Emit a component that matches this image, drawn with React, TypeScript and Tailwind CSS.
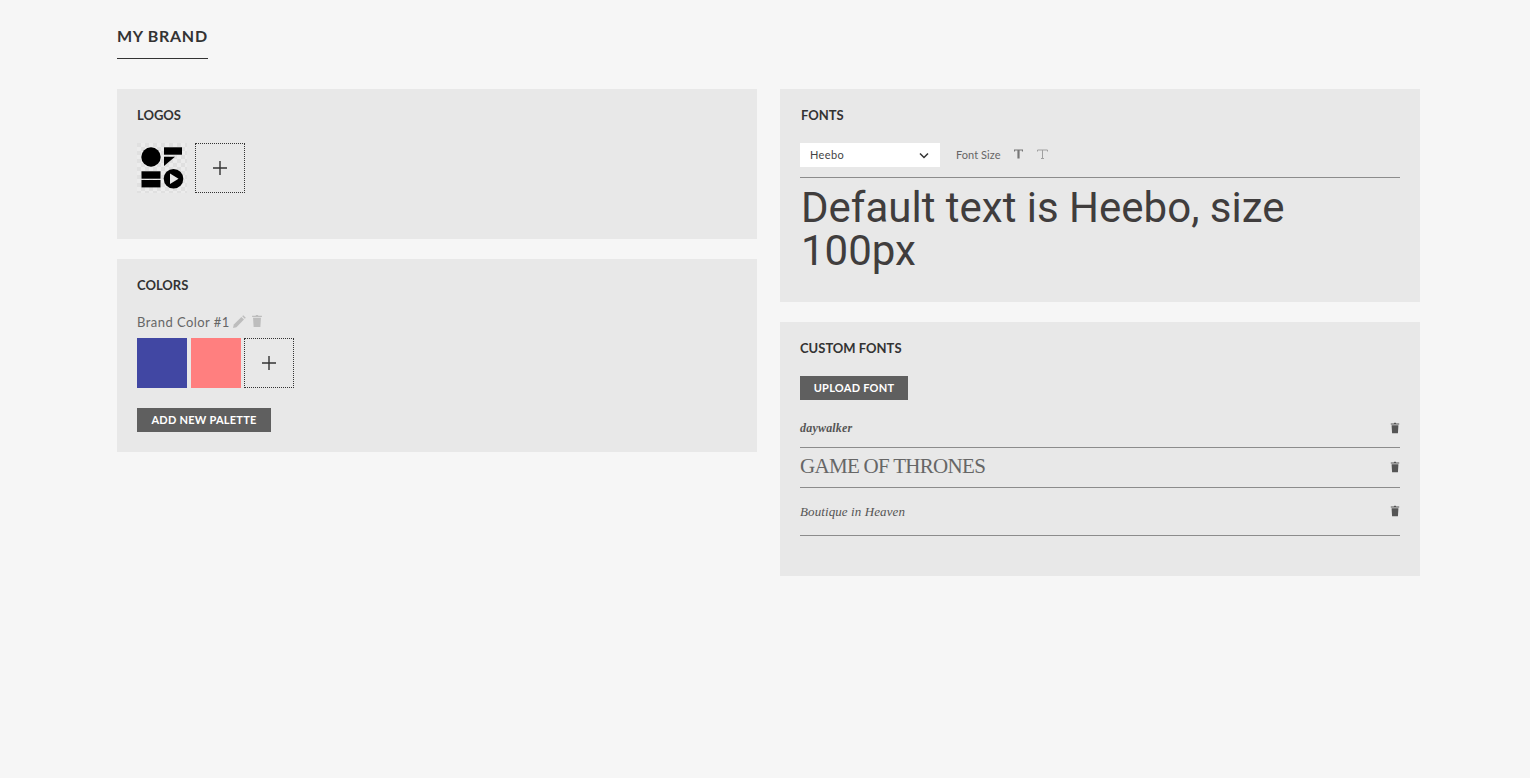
import React from 'react'

const sans = 'font-["Lato","Noto_Sans",sans-serif]'

const AddBox = () => (
  <div className="w-[50px] h-[50px] border border-dotted border-[#333] flex items-center justify-center">
    <svg width="14" height="14" viewBox="0 0 14 14" stroke="#333" strokeWidth="1.4">
      <path d="M7 0v14M0 7h14" />
    </svg>
  </div>
)

const Trash = ({ color = '#555', size = 12 }: { color?: string; size?: number }) => (
  <svg width={size} height={size} viewBox="0 0 12 12" fill={color}>
    <path d="M1.8 1.6h3L5.2.8h1.6l.4.8h3v1H1.8z" />
    <path d="M2.6 3.2h6.8l-.5 8H3.1z" />
  </svg>
)

const Logo = () => (
  <svg width="50" height="50" viewBox="0 0 50 50">
    <defs>
      <pattern id="check" width="8" height="8" patternUnits="userSpaceOnUse">
        <rect width="8" height="8" fill="#ececec" />
        <rect width="4" height="4" fill="#e0e0e0" />
        <rect x="4" y="4" width="4" height="4" fill="#e0e0e0" />
      </pattern>
    </defs>
    <rect width="50" height="50" fill="url(#check)" />
    <circle cx="14" cy="14" r="9.7" fill="#000" />
    <rect x="27" y="4.3" width="18" height="7.4" fill="#000" />
    <path d="M27 13.7h11L27 23z" fill="#000" />
    <rect x="4.5" y="28.3" width="19" height="7.4" fill="#000" />
    <rect x="4.5" y="37" width="19" height="7.4" fill="#000" />
    <circle cx="36.5" cy="35.7" r="9.8" fill="#000" />
    <path d="M33 30.5v10.4l8.5-5.2z" fill="#e8e8e8" />
  </svg>
)

const FontRow = ({ children, h, up }: { children: React.ReactNode; h: string; up?: boolean }) => (
  <div className={`${h} border-b border-[#8c8c8c] flex items-center justify-between`}>
    {children}
    <span className={up ? 'mr-[-1px] mt-[-2px]' : 'mr-[-1px]'}><Trash /></span>
  </div>
)

export default function App() {
  return (
    <div className={`min-h-[778px] bg-[#f6f6f6] pl-[117px] pr-[110px] pt-[26px] text-[#333] ${sans}`}>
      <div className="w-[91px] h-[33px] border-b border-[#333] text-[16px] leading-5 font-bold tracking-[0.7px] whitespace-nowrap text-[#333]">
        MY BRAND
      </div>

      <div className="flex gap-[23px] items-start mt-[30px]">
        <div className="w-[640px] flex flex-col gap-5">
          <section className="h-[150px] bg-[#e8e8e8] px-5 pt-[18px]">
            <h2 className="text-[13px] leading-4 font-bold">LOGOS</h2>
            <div className="flex gap-[8px] mt-[20px]">
              <Logo />
              <AddBox />
            </div>
          </section>

          <section className="h-[193px] bg-[#e8e8e8] px-5 pt-[18px]">
            <h2 className="text-[13px] leading-4 font-bold">COLORS</h2>
            <div className="flex items-center mt-[21px] h-[18px] text-[13px] text-[#666] tracking-[0.45px]">
              Brand Color #1
              <svg className="ml-[2px] mt-[-2px]" width="14" height="14" viewBox="0 0 14 14" fill="#bdbdbd">
                <path d="M1 13l.8-3.4 7.6-7.6 2.6 2.6-7.6 7.6z" />
                <path d="M10.2 1.2l1-1 2.6 2.6-1 1z" />
              </svg>
              <span className="ml-[4px] mt-[-4px]"><Trash color="#bdbdbd" size={14} /></span>
            </div>
            <div className="flex gap-1 mt-[6px]">
              <div className="w-[50px] h-[50px] bg-[#4147a3]" />
              <div className="w-[50px] h-[50px] bg-[#ff7f7f]" />
              <div className="ml-[-1px]"><AddBox /></div>
            </div>
            <button className="block mt-5 h-6 w-[134px] bg-[#5f5f5f] text-white text-[11px] font-bold tracking-[0.25px]">
              ADD NEW PALETTE
            </button>
          </section>
        </div>

        <div className="w-[640px] flex flex-col gap-5">
          <section className="h-[213px] bg-[#e8e8e8] px-5 pt-[18px]">
            <h2 className="text-[13px] leading-4 font-bold ml-px">FONTS</h2>
            <div className="flex items-center h-[24px] mt-[20px]">
              <div className="w-[140px] h-full bg-white flex items-center justify-between pl-[10px] pr-[11px] text-[11px] text-[#444] tracking-[0.35px]">
                Heebo
                <svg width="10" height="7" viewBox="0 0 10 7" fill="none" stroke="#333" strokeWidth="1.5">
                  <path d="M1 1.5l4 4 4-4" />
                </svg>
              </div>
              <span className="ml-[16px] text-[11px] text-[#666] tracking-[0.05px]">Font Size</span>
              <svg className="ml-[14px] mt-[-2px]" width="9" height="10" viewBox="0 0 9 10" fill="none" stroke="#777">
                <path d="M.5 2.5V1h8v1.5" strokeWidth="1.2" />
                <path d="M4.5 1v8.5" strokeWidth="2.2" />
              </svg>
              <svg className="ml-[14px] mt-[-2px]" width="11" height="10" viewBox="0 0 11 10" fill="none" stroke="#a0a0a0" strokeWidth="1">
                <path d="M.5 2.5V1h10v1.5" />
                <path d="M5.5 1v8.5" />
                <path d="M4 9.5h3" />
              </svg>
            </div>
            <div className="border-t border-[#8c8c8c] mt-[10px] pt-[8px] pl-px font-['Roboto',sans-serif] text-[42px] leading-[43px] text-[#403d3d]">
              Default text is Heebo, size 100px
            </div>
          </section>

          <section className="h-[254px] bg-[#e8e8e8] px-5 pt-[18px]">
            <h2 className="text-[13px] leading-4 font-bold">CUSTOM FONTS</h2>
            <button className="block mt-5 h-6 w-[108px] bg-[#5f5f5f] text-white text-[11px] font-bold tracking-[0.25px]">
              UPLOAD FONT
            </button>
            <div className="mt-[8px]">
              <FontRow h="h-[40px]">
                <span className="font-['Liberation_Serif',serif] italic font-bold text-[12px] text-[#555] tracking-[0.2px]">daywalker</span>
              </FontRow>
              <FontRow h="h-[40px]" up>
                <span className="mt-[-3px] font-['Liberation_Serif',serif] text-[21px] text-[#666] tracking-[-0.7px] leading-none">GAME OF THRONES</span>
              </FontRow>
              <FontRow h="h-[48px]" up>
                <span className="font-['Liberation_Serif',serif] italic text-[13px] text-[#555] tracking-[0.1px]">Boutique in Heaven</span>
              </FontRow>
            </div>
          </section>
        </div>
      </div>
    </div>
  )
}
